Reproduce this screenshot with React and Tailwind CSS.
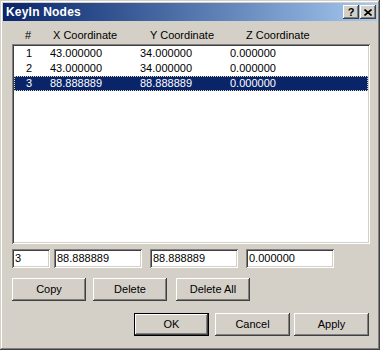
import { } from 'react'

const rows = [
  { n: '1', x: '43.000000', y: '34.000000', z: '0.000000' },
  { n: '2', x: '43.000000', y: '34.000000', z: '0.000000' },
  { n: '3', x: '88.888889', y: '88.888889', z: '0.000000', sel: true },
]

const raised = 'shadow-[inset_-1px_-1px_#404040,inset_1px_1px_#fff,inset_-2px_-2px_#808080,inset_2px_2px_#d4d0c8]'
const sunken = 'shadow-[inset_1px_1px_#808080,inset_-1px_-1px_#fff,inset_2px_2px_#404040,inset_-2px_-2px_#d4d0c8]'

function Btn({ label, className = 'w-[74px]' }) {
  return (
    <div className={`h-[23px] flex items-center justify-center bg-[#d4d0c8] ${raised} ${className}`}>
      {label}
    </div>
  )
}

function Field({ value, className = '' }) {
  return (
    <div className={`h-[19px] bg-white pl-[3px] flex items-center leading-none ${sunken} ${className}`}>
      {value}
    </div>
  )
}

export default function App() {
  return (
    <div className="w-[380px] h-[350px] bg-[#d4d0c8] p-[3px] font-['Liberation_Sans',Arial,sans-serif] text-[11px] text-black shadow-[inset_-1px_-1px_#404040,inset_1px_1px_#d4d0c8,inset_-2px_-2px_#808080,inset_2px_2px_#fff] overflow-hidden select-none">
      {/* title bar */}
      <div className="h-[18px] flex items-center justify-between bg-linear-to-r from-[#0a246a] to-[#a6caf0] pl-[3px] pr-[1px]">
        <span className="text-white font-bold text-[12px] tracking-[0.2px]">KeyIn Nodes</span>
        <div className="flex">
          <div className={`w-[16px] h-[14px] flex items-center justify-center bg-[#d4d0c8] font-bold text-[11px] leading-none ${raised}`}>?</div>
          <div className={`w-[16px] h-[14px] ml-[1px] flex items-center justify-center bg-[#d4d0c8] ${raised}`}>
            <svg width="8" height="7" viewBox="0 0 8 7">
              <path d="M0.5 0.5 L7.5 6.5 M7.5 0.5 L0.5 6.5" stroke="#000" strokeWidth="1.6" />
            </svg>
          </div>
        </div>
      </div>

      <div className="pl-[9px]">
        {/* header */}
        <div className="mt-[7px] h-[14px] flex items-center pl-[13px] leading-[14px]">
          <span className="w-[28px]">#</span>
          <span className="w-[97px]">X Coordinate</span>
          <span className="w-[96px]">Y Coordinate</span>
          <span>Z Coordinate</span>
        </div>

        {/* list */}
        <div className={`mt-[2px] w-[358px] h-[200px] bg-white p-[2px] ${sunken}`}>
          {rows.map((r) => (
            <div key={r.n}
              className={`h-[15px] flex items-center pl-[12px] leading-none ${r.sel ? 'bg-[#0a246a] text-white outline-1 outline-dotted outline-[#d8d8a8] -outline-offset-1' : ''}`}>
              <span className="w-[24px]">{r.n}</span>
              <span className="w-[90px]">{r.x}</span>
              <span className="w-[90px]">{r.y}</span>
              <span>{r.z}</span>
            </div>
          ))}
        </div>

        {/* edit fields */}
        <div className="mt-[5px] flex">
          <Field value="3" className="w-[38px]" />
          <Field value="88.888889" className="w-[88px] ml-[4px]" />
          <Field value="88.888889" className="w-[88px] ml-[8px]" />
          <Field value="0.000000" className="w-[88px] ml-[8px]" />
        </div>

        {/* edit buttons */}
        <div className="mt-[10px] flex">
          <Btn label="Copy" />
          <Btn label="Delete" className="w-[74px] ml-[7px]" />
          <Btn label="Delete All" className="w-[74px] ml-[9px]" />
        </div>

        {/* dialog buttons */}
        <div className="mt-[12px] flex pl-[122px]">
          <div className="w-[75px] h-[23px] border border-black">
            <div className={`w-full h-full flex items-center justify-center ${raised}`}>OK</div>
          </div>
          <Btn label="Cancel" className="w-[75px] ml-[6px]" />
          <Btn label="Apply" className="w-[75px] ml-[4px]" />
        </div>
      </div>
    </div>
  )
}
